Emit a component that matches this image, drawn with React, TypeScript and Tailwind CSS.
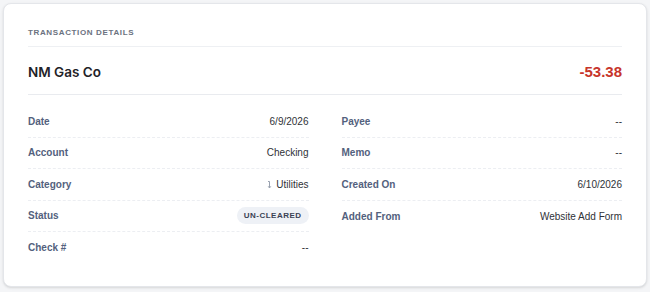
const left = [
  { label: "Date", value: "6/9/2026" },
  { label: "Account", value: "Checking" },
  { label: "Category", value: "Utilities", icon: true },
  { label: "Status", value: "UN-CLEARED", badge: true },
  { label: "Check #", value: "--" },
];

const right = [
  { label: "Payee", value: "--" },
  { label: "Memo", value: "--" },
  { label: "Created On", value: "6/10/2026" },
  { label: "Added From", value: "Website Add Form" },
];

type Row = { label: string; value: string; icon?: boolean; badge?: boolean };

function SubIcon() {
  return (
    <svg width="5" height="9" viewBox="0 0 5 9" className="mr-[4px] text-gray-400" fill="none" stroke="currentColor" strokeWidth="1">
      <path d="M1 1.5 H2.5 V8" />
      <path d="M1.2 6.3 L2.5 8 L3.8 6.3" />
    </svg>
  );
}

function Column({ rows }: { rows: Row[] }) {
  return (
    <div className="flex flex-col">
      {rows.map((r, i) => (
        <div
          key={r.label}
          className={`flex items-center justify-between h-[31.5px] ${
            i < rows.length - 1 ? "border-b border-dashed border-[#eceef2]" : ""
          }`}
        >
          <span className="text-[10px] font-bold text-[#53617d]">{r.label}</span>
          {r.badge ? (
            <span className="rounded-full bg-[#eef1f6] px-[7px] py-[2.5px] text-[8px] font-bold tracking-[0.06em] text-[#3a4254]">
              {r.value}
            </span>
          ) : (
            <span className="flex items-center text-[10px] text-[#2f3237]">
              {r.icon && <SubIcon />}
              {r.value}
            </span>
          )}
        </div>
      ))}
    </div>
  );
}

export default function App() {
  return (
    <div className="w-[650px] h-[292px] bg-[#f4f5f7] p-[3px] font-['Liberation_Sans',Arial,sans-serif]">
      <div className="h-[284px] w-[644px] rounded-lg border border-[#e4e6ea] bg-white px-6 pt-[23px] shadow-sm">
        <div className="border-b border-[#eef0f3] pb-[7px]">
          <h2 className="text-[8px] font-bold uppercase leading-[12px] tracking-[0.08em] text-[#6b7280]">
            Transaction Details
          </h2>
        </div>
        <div className="flex h-[48px] items-center justify-between border-b border-[#e9ebef] pt-[3px]">
          <span className="font-['Inter',sans-serif] text-[13.5px] font-semibold text-[#1f2328]">NM Gas Co</span>
          <span className="text-[15px] font-bold text-[#c7352b]">-53.38</span>
        </div>
        <div className="grid grid-cols-2 gap-x-[33px] pt-[11px]">
          <Column rows={left} />
          <Column rows={right} />
        </div>
      </div>
    </div>
  );
}
